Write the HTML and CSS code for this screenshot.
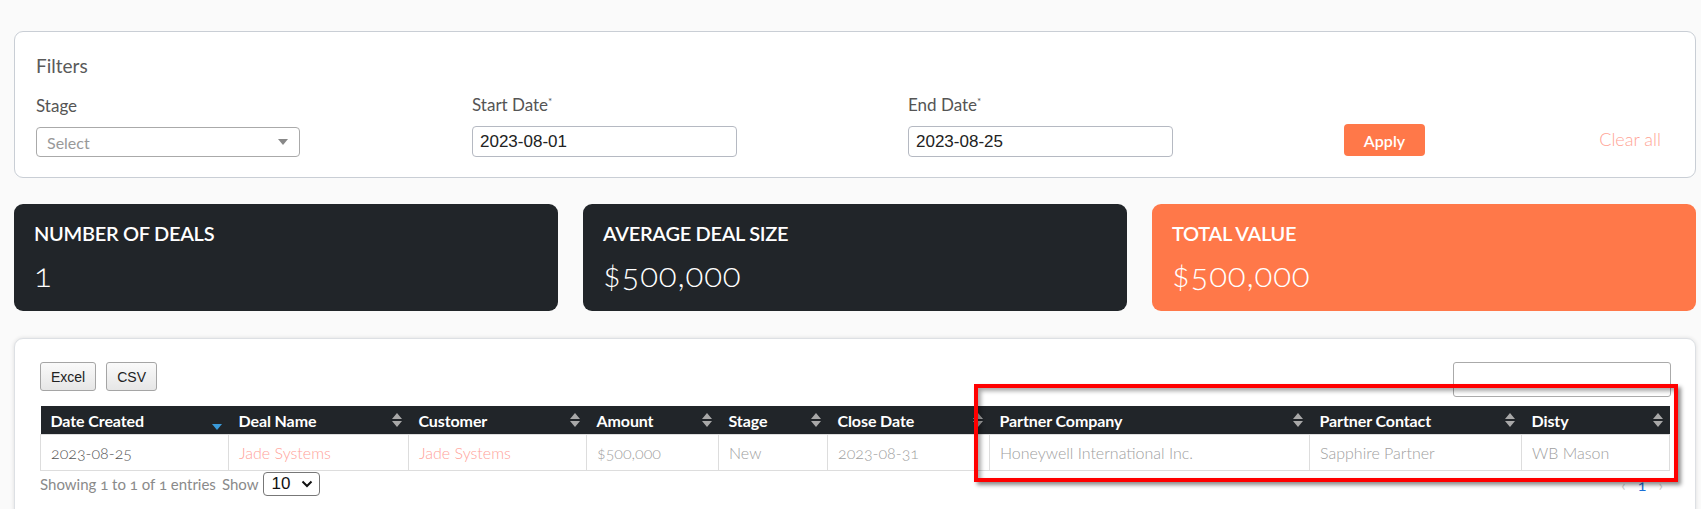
FILE: index.html
```html
<!DOCTYPE html>
<html>

<head>
    <link rel="stylesheet" href="styles.css">
</head>

<body>
    <div class="card filters">
        <div class="filters-title">Filters</div>
        <div class="filter-row">
            <div class="field">
                <label>Stage</label>
                <div class="fake-select">
                    <span>Select</span>
                    <span class="caret"></span>
                </div>
            </div>
            <div class="field">
                <label>Start Date<sup>*</sup></label>
                <input type="text" class="date-input" value="2023-08-01">
            </div>
            <div class="field">
                <label>End Date<sup>*</sup></label>
                <input type="text" class="date-input" value="2023-08-25">
            </div>
            <button class="apply-btn">Apply</button>
            <a class="clear-link">Clear all</a>
        </div>
    </div>

    <div class="stats">
        <div class="stat-card dark">
            <div class="stat-title">NUMBER OF DEALS</div>
            <div class="stat-value">1</div>
        </div>
        <div class="stat-card dark">
            <div class="stat-title">AVERAGE DEAL SIZE</div>
            <div class="stat-value">$500,000</div>
        </div>
        <div class="stat-card orange">
            <div class="stat-title">TOTAL VALUE</div>
            <div class="stat-value">$500,000</div>
        </div>
    </div>

    <div class="card deals">
        <div class="toolbar">
            <div class="export-btns">
                <button class="export-btn">Excel</button>
                <button class="export-btn">CSV</button>
            </div>
            <input type="text" class="search-input">
        </div>

        <table class="deals-table">
            <colgroup>
                <col style="width:188px"><col style="width:180px"><col style="width:178px">
                <col style="width:132px"><col style="width:109px"><col style="width:162px">
                <col style="width:320px"><col style="width:212px"><col style="width:148px">
            </colgroup>
            <thead>
                <tr>
                    <th>Date Created
                        <svg class="sort sort-active" width="10" height="16" viewBox="0 0 10 16"><path d="M0 9 L5 15 L10 9 Z"/></svg>
                    </th>
                    <th>Deal Name
                        <svg class="sort" width="10" height="16" viewBox="0 0 10 16"><path d="M0 7 L5 1 L10 7 Z M0 9 L5 15 L10 9 Z"/></svg>
                    </th>
                    <th>Customer
                        <svg class="sort" width="10" height="16" viewBox="0 0 10 16"><path d="M0 7 L5 1 L10 7 Z M0 9 L5 15 L10 9 Z"/></svg>
                    </th>
                    <th>Amount
                        <svg class="sort" width="10" height="16" viewBox="0 0 10 16"><path d="M0 7 L5 1 L10 7 Z M0 9 L5 15 L10 9 Z"/></svg>
                    </th>
                    <th>Stage
                        <svg class="sort" width="10" height="16" viewBox="0 0 10 16"><path d="M0 7 L5 1 L10 7 Z M0 9 L5 15 L10 9 Z"/></svg>
                    </th>
                    <th>Close Date
                        <svg class="sort" width="10" height="16" viewBox="0 0 10 16"><path d="M0 7 L5 1 L10 7 Z M0 9 L5 15 L10 9 Z"/></svg>
                    </th>
                    <th>Partner Company
                        <svg class="sort" width="10" height="16" viewBox="0 0 10 16"><path d="M0 7 L5 1 L10 7 Z M0 9 L5 15 L10 9 Z"/></svg>
                    </th>
                    <th>Partner Contact
                        <svg class="sort" width="10" height="16" viewBox="0 0 10 16"><path d="M0 7 L5 1 L10 7 Z M0 9 L5 15 L10 9 Z"/></svg>
                    </th>
                    <th>Disty
                        <svg class="sort" width="10" height="16" viewBox="0 0 10 16"><path d="M0 7 L5 1 L10 7 Z M0 9 L5 15 L10 9 Z"/></svg>
                    </th>
                </tr>
            </thead>
            <tbody>
                <tr>
                    <td class="date-cell">2023-08-25</td>
                    <td class="link-cell">Jade Systems</td>
                    <td class="link-cell">Jade Systems</td>
                    <td>$500,000</td>
                    <td>New</td>
                    <td>2023-08-31</td>
                    <td>Honeywell International Inc.</td>
                    <td>Sapphire Partner</td>
                    <td>WB Mason</td>
                </tr>
            </tbody>
        </table>

        <div class="table-footer">
            <span class="info">Showing 1 to 1 of 1 entries</span>
            <span class="show-label">Show</span>
            <div class="length-select">
                <span>10</span>
                <svg width="12" height="8" viewBox="0 0 12 8"><path d="M1.5 1.5 L6 6 L10.5 1.5" fill="none" stroke="#111" stroke-width="2"/></svg>
            </div>
            <div class="pager">
                <span class="chev">&lsaquo;</span>
                <span class="page-num">1</span>
                <span class="chev">&rsaquo;</span>
            </div>
        </div>
    </div>

    <div class="highlight-box"></div>
</body>

</html>
```

FILE: styles.css
```css
html, body {
    overflow: hidden;
}

body {
    margin: 0;
    padding: 31px 5px 0 14px;
    background-color: #fafafa;
    font-family: Lato, "Open Sans", sans-serif;
    color: #555;
    font-variant-numeric: oldstyle-nums;
}

.card {
    background-color: #fff;
    border: 1px solid #c9ced5;
    border-radius: 9px;
}

/* filters */
.filters {
    padding: 22px 21px 20px 21px;
}

.filters-title {
    font-size: 19px;
    line-height: 24px;
    color: #5a5a5a;
    margin-bottom: 16px;
}

.filter-row {
    display: grid;
    grid-template-columns: 436px 436px 436px 253px 1fr;
    align-items: end;
}

.field label {
    display: block;
    font-size: 17px;
    line-height: 22px;
    color: #555;
    margin-bottom: 10px;
}

.field label sup {
    font-size: 10px;
    vertical-align: 6px;
    line-height: 0;
}

.fake-select {
    width: 264px;
    height: 30px;
    box-sizing: border-box;
    border: 1px solid #aaa;
    border-radius: 4px;
    display: flex;
    align-items: center;
    justify-content: space-between;
    padding: 0 11px 0 10px;
    font-size: 16px;
    color: #999;
}

.caret {
    width: 0;
    height: 0;
    border-left: 5px solid transparent;
    border-right: 5px solid transparent;
    border-top: 6px solid #888;
}

.date-input {
    width: 265px;
    height: 31px;
    box-sizing: border-box;
    border: 1px solid #b5b9c2;
    border-radius: 4px;
    padding: 0 7px;
    font-family: "Liberation Sans", Arial, sans-serif;
    font-size: 17px;
    color: #222;
    font-variant-numeric: normal;
}

.apply-btn {
    width: 81px;
    height: 32px;
    margin-bottom: 1px;
    border: none;
    border-radius: 4px;
    background-color: #ff7849;
    color: #fff;
    font-family: Lato, sans-serif;
    font-size: 16px;
    font-weight: 600;
}

.clear-link {
    justify-self: end;
    margin-right: 13px;
    margin-bottom: 7px;
    font-size: 18px;
    font-weight: 300;
    color: #ffa495;
}

/* stat cards */
.stats {
    display: grid;
    grid-template-columns: 1fr 1fr 1fr;
    gap: 25px;
    margin-top: 26px;
}

.stat-card {
    height: 107px;
    box-sizing: border-box;
    border-radius: 9px;
    padding: 18px 20px;
    color: #fff;
}

.stat-card.dark {
    background-color: #212529;
}

.stat-card.orange {
    background-color: #ff7849;
}

.stat-title {
    font-size: 20px;
    line-height: 22px;
    font-weight: 600;
    letter-spacing: -0.3px;
}

.stat-value {
    margin-top: 11px;
    font-size: 33px;
    line-height: 38px;
    font-weight: 300;
    letter-spacing: 0.8px;
}

/* deals table */
.deals {
    margin-top: 27px;
    padding: 23px 26px 40px 25px;
    border-color: #dde0e4;
    box-shadow: 0 0 4px rgba(0, 0, 0, 0.12);
}

.toolbar {
    display: flex;
    justify-content: space-between;
    align-items: flex-start;
    margin-bottom: 9px;
}

.export-btns {
    display: flex;
    gap: 10px;
}

.export-btn {
    height: 29px;
    padding: 0 10px;
    border: 1px solid #a5a5a5;
    border-radius: 3px;
    background: linear-gradient(#fafafa, #e6e6e6);
    font-family: "Liberation Sans", Arial, sans-serif;
    font-size: 14px;
    color: #222;
}

.search-input {
    width: 218px;
    height: 35px;
    box-sizing: border-box;
    border: 1px solid #aaa;
    border-radius: 3px;
    margin-right: -2px;
}

.deals-table {
    width: 1629px;
    table-layout: fixed;
    border-collapse: collapse;
}

.deals-table th {
    position: relative;
    height: 28px;
    padding: 0 10px;
    background-color: #212529;
    color: #fff;
    font-size: 16px;
    font-weight: 700;
    text-align: left;
    letter-spacing: -0.1px;
}

.sort {
    position: absolute;
    right: 7px;
    top: 6px;
    fill: #a8a8a8;
}

.sort-active {
    fill: #3a9ad9;
    top: 9px;
}

.deals-table td {
    height: 35px;
    padding: 0 10px;
    border: 1px solid #ddd;
    font-size: 16px;
    font-weight: 300;
    color: #a0a0a0;
    white-space: nowrap;
}

.deals-table td.date-cell {
    color: #555;
}

.deals-table td.link-cell {
    color: #ffa39a;
}

.table-footer {
    display: flex;
    align-items: center;
    margin-top: 1px;
    font-size: 15px;
    color: #8a8a8a;
}

.show-label {
    margin-left: 6px;
}

.length-select {
    display: flex;
    align-items: center;
    justify-content: space-between;
    width: 57px;
    height: 24px;
    box-sizing: border-box;
    margin-left: 5px;
    padding: 0 6px 0 7px;
    border: 1px solid #777;
    border-radius: 4px;
    font-family: "Liberation Sans", Arial, sans-serif;
    font-size: 17px;
    color: #111;
}

.pager {
    margin-left: auto;
    margin-right: 6px;
    display: flex;
    gap: 12px;
    font-size: 16px;
}

.chev {
    color: #ccc;
}

.page-num {
    color: #1a6fd6;
}

/* annotation */
.highlight-box {
    position: absolute;
    left: 974px;
    top: 384px;
    width: 704px;
    height: 98px;
    box-sizing: border-box;
    border: 4px solid #ff0000;
    box-shadow: 3px 3px 4px rgba(0, 0, 0, 0.45), inset 3px 3px 4px rgba(0, 0, 0, 0.35);
}
```
